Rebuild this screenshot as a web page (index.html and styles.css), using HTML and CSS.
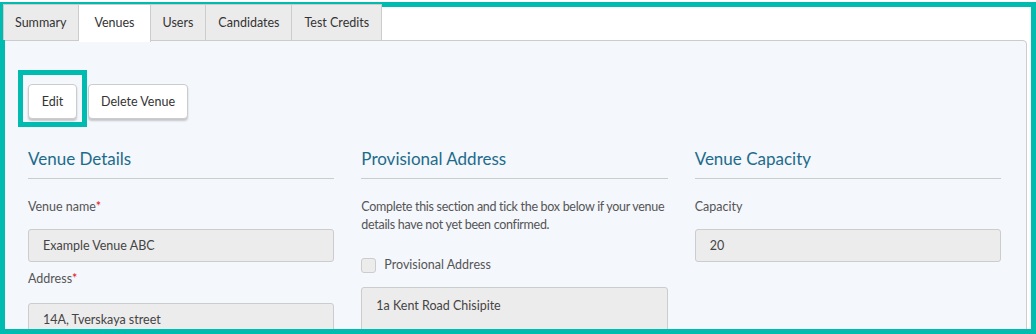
FILE: index.html
```html
<!DOCTYPE html>
<html lang="en">
<head>
  <meta charset="UTF-8">
  <title>Venues</title>
  <link rel="stylesheet" href="styles.css">
</head>
<body>

  <div class="wrap">
    <!-- Tabs -->
    <ul class="tabs">
      <li class="tab first">Summary</li>
      <li class="tab active">Venues</li>
      <li class="tab">Users</li>
      <li class="tab">Candidates</li>
      <li class="tab">Test Credits</li>
    </ul>

    <div class="panel">
      <div class="actions">
        <button type="button" class="btn marked">Edit</button>
        <button type="button" class="btn">Delete Venue</button>
      </div>

      <div class="cols">
        <!-- Venue Details -->
        <section class="col">
          <h3>Venue Details</h3>
          <label>Venue name<span class="req">*</span></label>
          <input type="text" class="field" value="Example Venue ABC" readonly>
          <label class="next">Address<span class="req">*</span></label>
          <input type="text" class="field addr" value="14A, Tverskaya street" readonly>
        </section>

        <!-- Provisional Address -->
        <section class="col">
          <h3>Provisional Address</h3>
          <p class="note">Complete this section and tick the box below if your venue details have not yet been confirmed.</p>
          <label class="check"><input type="checkbox"> Provisional Address</label>
          <textarea class="field area" readonly>1a Kent Road Chisipite</textarea>
        </section>

        <!-- Venue Capacity -->
        <section class="col">
          <h3>Venue Capacity</h3>
          <label>Capacity</label>
          <input type="text" class="field" value="20" readonly>
        </section>
      </div>
    </div>
  </div>

  <div class="frame"></div>

</body>
</html>
```

FILE: styles.css
```css
html, body {
  margin: 0;
  height: 100%;
  overflow: hidden;
}

body {
  font-family: Lato, "Liberation Sans", sans-serif;
  font-size: 12.5px;
  color: #444;
  background: white;
}

.wrap {
  margin: 0 9px 0 3px;
  padding-top: 4px;
}

/* tabs */
.tabs {
  list-style: none;
  margin: 0;
  padding: 0;
  display: flex;
  height: 36px;
  position: relative;
  z-index: 1;
}

.tab {
  padding: 0 12px;
  line-height: 35px;
  background: #ebebeb;
  border: 1px solid #ccc;
  border-left: none;
  border-bottom: none;
  color: #333;
}

.tab.first {
  border-left: 1px solid #ccc;
  padding-left: 11px;
}

.tab.active {
  background: white;
  height: 37px;
  padding: 0 15px;
}

/* panel */
.panel {
  background: #f4f7fc;
  border: 1px solid #ccc;
  border-radius: 0 4px 0 0;
  padding: 43px 25px 40px 24px;
  min-height: 400px;
}

.actions {
  display: flex;
  gap: 11px;
}

.btn {
  font-family: inherit;
  font-size: 12.5px;
  color: #333;
  background: white;
  border: 1px solid #ccc;
  border-radius: 4px;
  height: 35px;
  padding: 0 12px;
  box-shadow: 0 2px 2px rgba(0, 0, 0, 0.2);
}

.btn.marked {
  position: relative;
  width: 49px;
  padding: 0;
}

.btn.marked::after {
  content: "";
  position: absolute;
  top: -15px;
  left: -11px;
  right: -11px;
  bottom: -9px;
  border: 5px solid #00bbb0;
}

.cols {
  display: grid;
  grid-template-columns: repeat(3, 1fr);
  column-gap: 27px;
  margin-top: 28px;
}

h3 {
  margin: 0 0 19px;
  font-weight: normal;
  font-size: 17px;
  line-height: 24px;
  color: #1d6b8b;
  padding-bottom: 7px;
  border-bottom: 1px solid #ccc;
}

label {
  display: block;
  line-height: 18px;
  color: #555;
}

.req {
  color: #e01010;
}

label.next {
  margin-top: 8px;
}

.field {
  display: block;
  box-sizing: border-box;
  width: 100%;
  height: 33px;
  margin-top: 13px;
  padding: 0 14px;
  font-family: inherit;
  font-size: 12.5px;
  color: #444;
  background: #ececec;
  border: 1px solid #ccc;
  border-radius: 3px;
}

.field.addr {
  margin-top: 15px;
}

.note {
  margin: 0;
  line-height: 18px;
  color: #555;
  letter-spacing: -0.3px;
}

.check {
  display: flex;
  align-items: center;
  gap: 8px;
  margin-top: 22px;
}

.check input {
  appearance: none;
  margin: 0;
  width: 15px;
  height: 15px;
  background: #ececec;
  border: 1px solid #ccc;
  border-radius: 3px;
}

.area {
  margin-top: 13px;
  height: 80px;
  padding-top: 9px;
  resize: none;
  line-height: 18px;
}

/* annotation frame */
.frame {
  position: fixed;
  top: 2px;
  left: 0;
  right: 0;
  bottom: 0;
  border: 5px solid #00bbb0;
  pointer-events: none;
}
```
